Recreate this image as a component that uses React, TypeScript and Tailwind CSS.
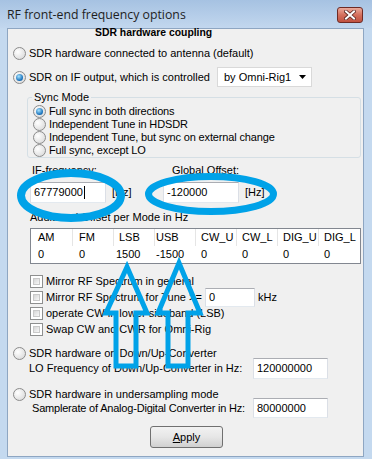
import React from 'react';

const Radio: React.FC<{ checked?: boolean }> = ({ checked }) => (
  <span className="relative inline-block w-[13px] h-[13px] shrink-0 rounded-full border border-[#8b8b8b] bg-[radial-gradient(circle_at_35%_35%,#ffffff,#d4d4d4)]">
    {checked && (
      <span className="absolute left-[2px] top-[2px] w-[7px] h-[7px] rounded-full bg-[radial-gradient(circle_at_40%_35%,#a8e4ff,#1c74bd_65%,#0d4a86)]" />
    )}
  </span>
);

const Checkbox = () => (
  <span className="inline-block w-[13px] h-[13px] shrink-0 border border-[#8e8f8f] bg-white p-[2px]">
    <span className="block w-full h-full border border-[#c9c9c9] bg-linear-to-br from-[#d6d6d6] to-[#f8f8f8]" />
  </span>
);

interface TextBoxProps {
  value: string;
  className?: string;
  cursor?: boolean;
}

const TextBox: React.FC<TextBoxProps> = ({ value, className, cursor }) => (
  <div
    className={
      'flex items-center shrink-0 bg-white pl-[3px] border border-t-[#abadb3] border-x-[#dbdfe6] border-b-[#e3e9ef] ' +
      (className ?? '')
    }
  >
    <span>{value}</span>
    {cursor && <span className="ml-[1px] w-[1px] h-[13px] bg-black" />}
  </div>
);

const headers = [
  { t: 'AM', h: 'pl-[7px]', d: 'pl-[7px]', v: '0' },
  { t: 'FM', h: 'pl-[6px]', d: 'pl-[6px]', v: '0' },
  { t: 'LSB', h: 'pl-[5px]', d: 'pl-[2px]', v: '1500' },
  { t: 'USB', h: 'pl-[1px]', d: 'pl-[1px]', v: '-1500' },
  { t: 'CW_U', h: 'pl-[5px]', d: 'pl-[5px]', v: '0' },
  { t: 'CW_L', h: 'pl-[5px]', d: 'pl-[5px]', v: '0' },
  { t: 'DIG_U', h: 'pl-[5px]', d: 'pl-[5px]', v: '0' },
  { t: 'DIG_L', h: 'pl-[5px]', d: 'pl-[5px]', v: '0' },
];

export default function App() {
  return (
    <div className="relative w-[372px] h-[459px] overflow-hidden flex flex-col bg-[#c4d9ef] text-[11px] leading-[13px] text-black font-['Liberation_Sans',Arial,sans-serif]">
      {/* title bar */}
      <div className="h-[28px] shrink-0 flex justify-between pl-[7px] pr-[9px] bg-linear-to-b from-[#a6c2e2] to-[#c2d7ee]">
        <span className="self-center text-[12.3px] text-[#1e1e1e] font-['Open_Sans',sans-serif]">
          RF front-end frequency options
        </span>
        <div className="mt-[7px] w-[26px] h-[16px] rounded-[3px] border border-[#6e2a24] bg-linear-to-b from-[#eaaa9c] via-[#d46f5c] to-[#c0513f] flex items-center justify-center">
          <svg width="12" height="10" viewBox="0 0 12 10">
            <path d="M2 1.5 L10 8.5 M10 1.5 L2 8.5" stroke="#5a2620" strokeWidth="3.6" strokeLinecap="square" />
            <path d="M2 1.5 L10 8.5 M10 1.5 L2 8.5" stroke="#ffffff" strokeWidth="2" strokeLinecap="square" />
          </svg>
        </div>
      </div>

      {/* client area */}
      <div className="ml-[7px] mr-[8px] mb-[2px] flex-1 border border-[#8ea6c2] bg-[#f0f0f0] flex flex-col">
        <div className="h-[8px] leading-[8px] pl-[87px] font-bold text-[10.4px]">SDR hardware coupling</div>

        <div className="mt-[6px] h-[20px] flex items-center gap-[3px] pl-[5px]">
          <Radio />
          <span>SDR hardware connected to antenna (default)</span>
        </div>

        <div className="mt-[4px] h-[20px] flex items-center">
          <div className="w-[209px] flex items-center gap-[3px] pl-[5px]">
            <Radio checked />
            <span>SDR on IF output, which is controlled</span>
          </div>
          <div className="w-[95px] h-[20px] bg-white border border-[#d9d9d9] flex items-center justify-between pl-[6px] pr-[5px]">
            <span>by Omni-Rig1</span>
            <svg width="7" height="4" viewBox="0 0 7 4">
              <path d="M0 0 H7 L3.5 4 Z" fill="#000" />
            </svg>
          </div>
        </div>

        <fieldset className="mt-[3px] ml-[19px] w-[334px] rounded-[3px] border border-[#d5dfe5]">
          <legend className="ml-[4px] px-[2px] leading-[14px]">Sync Mode</legend>
          <div className="pt-[1px] flex flex-col">
            {[
              ['Full sync in both directions', true],
              ['Independent Tune in HDSDR', false],
              ['Independent Tune, but sync on external change', false],
              ['Full sync, except LO', false],
            ].map(([label, checked]) => (
              <div key={label as string} className="h-[13px] flex items-center gap-[3px] pl-[5px] tracking-[-0.15px]">
                <Radio checked={checked as boolean} />
                <span>{label as string}</span>
              </div>
            ))}
          </div>
        </fieldset>

        <div className="mt-[5px] h-[14px] flex items-center">
          <span className="w-[155px] pl-[24px]">IF-frequency:</span>
          <span className="pl-[9px]">Global Offset:</span>
        </div>

        <div className="mt-[5px] h-[21px] flex items-center">
          <div className="w-[155px] pl-[22px] flex items-center">
            <TextBox value="67779000" cursor className="w-[76px] h-[21px]" />
            <span className="ml-[6px]">[Hz]</span>
          </div>
          <div className="flex items-center">
            <TextBox value="-120000" className="w-[76px] h-[21px]" />
            <span className="ml-[6px]">[Hz]</span>
          </div>
        </div>

        <div className="mt-[7px] h-[14px] flex items-center pl-[22px]">Additional Offset per Mode in Hz</div>

        <div className="mt-[4px] ml-[22px] w-[331px] border border-[#828790] bg-white">
          <div className="grid grid-cols-[42px_41px_41px_41px_41px_41px_41px_41px] h-[17px]">
            {headers.map((c, i) => (
              <div
                key={c.t}
                className={'flex items-center ' + c.h + (i < 7 ? ' border-r border-[#e5e5e5]' : '')}
              >
                {c.t}
              </div>
            ))}
          </div>
          <div className="grid grid-cols-[42px_41px_41px_41px_41px_41px_41px_41px] h-[17px]">
            {headers.map((c) => (
              <div key={c.t} className={'flex items-center ' + c.d}>
                {c.v}
              </div>
            ))}
          </div>
        </div>

        <div className="mt-[9px] flex flex-col pl-[22px]">
          <div className="h-[16px] flex items-center gap-[3px]">
            <Checkbox />
            <span>Mirror RF Spectrum in general</span>
          </div>
          <div className="h-[16px] flex items-center">
            <div className="w-[175px] flex items-center gap-[3px]">
              <Checkbox />
              <span>Mirror RF Spectrum for Tune &gt;=</span>
            </div>
            <TextBox value="0" className="w-[50px] h-[19px]" />
            <span className="ml-[3px]">kHz</span>
          </div>
          <div className="h-[16px] flex items-center gap-[3px]">
            <Checkbox />
            <span>operate CW in lower sideband (LSB)</span>
          </div>
          <div className="h-[16px] flex items-center gap-[3px]">
            <Checkbox />
            <span>Swap CW and CWR for Omni-Rig</span>
          </div>
        </div>

        <div className="mt-[8px] h-[16px] flex items-center gap-[3px] pl-[5px]">
          <Radio />
          <span>SDR hardware on Down/Up-Converter</span>
        </div>
        <div className="h-[14px] flex items-center pl-[21px]">
          <span className="w-[224px] whitespace-nowrap">LO Frequency of Down/Up-Converter in Hz:</span>
          <TextBox value="120000000" className="w-[75px] h-[21px]" />
        </div>

        <div className="mt-[11px] h-[16px] flex items-center gap-[3px] pl-[5px]">
          <Radio />
          <span>SDR hardware in undersampling mode</span>
        </div>
        <div className="h-[12px] flex items-center pl-[24px]">
          <span className="w-[221px] whitespace-nowrap tracking-[-0.2px]">Samplerate of Analog-Digital Converter in Hz:</span>
          <TextBox value="80000000" className="w-[75px] h-[20px]" />
        </div>

        <button className="mt-[12px] ml-[142px] w-[73px] h-[22px] rounded-[3px] border border-[#707070] bg-linear-to-b from-[#f2f2f2] via-[#e6e6e6] to-[#d0d0d0] flex items-center justify-center">
          <span>
            <span className="underline">A</span>pply
          </span>
        </button>
      </div>

      {/* paint annotations */}
      <svg className="absolute left-0 top-0 pointer-events-none" width="372" height="459" viewBox="0 0 372 459">
        <g fill="none" stroke="#00a2e8">
          <ellipse cx="71" cy="195.5" rx="50" ry="22.5" strokeWidth="8" />
          <ellipse cx="211" cy="194" rx="62.5" ry="17.5" strokeWidth="7" />
          <polygon points="127,267 106,313 116,313 116,366 136,366 136,313 147,313" strokeWidth="5" />
          <polygon points="179,263 158,313 168,313 168,366 188,366 188,313 200,313" strokeWidth="5" />
        </g>
      </svg>
    </div>
  );
}
